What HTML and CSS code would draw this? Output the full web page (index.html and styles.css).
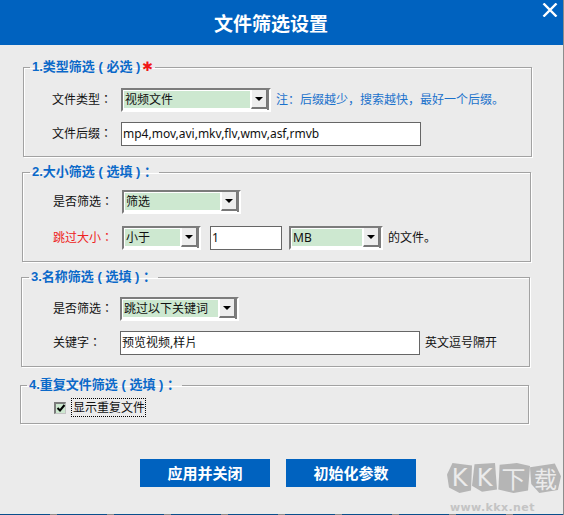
FILE: index.html
```html
<!DOCTYPE html>
<html lang="zh-CN">
<head>
<meta charset="utf-8">
<title>文件筛选设置</title>
<link rel="stylesheet" href="styles.css">
</head>
<body>
<div class="window">
  <header class="titlebar">
    <h1 class="title">文件筛选设置</h1>
    <svg class="close" width="16" height="14" viewBox="0 0 16 14"><path d="M1.5 0.5 L14.5 13.5 M14.5 0.5 L1.5 13.5" stroke="#fff" stroke-width="2.4" fill="none"/></svg>
  </header>
  <main class="content">
    <fieldset class="group g1">
      <legend class="legend">1.类型筛选 ( 必选 )<span class="star">✱</span></legend>
      <div class="row">
        <span class="label">文件类型：</span>
        <div class="combo w150"><span class="value">视频文件</span><span class="drop"><i class="arrow"></i></span></div>
        <span class="note">注：后缀越少，搜索越快，最好一个后缀。</span>
      </div>
      <div class="row">
        <span class="label">文件后缀：</span>
        <div class="field w300">mp4,mov,avi,mkv,flv,wmv,asf,rmvb</div>
      </div>
    </fieldset>
    <fieldset class="group g2">
      <legend class="legend">2.大小筛选 ( 选填 ) ：</legend>
      <div class="row">
        <span class="label">是否筛选：</span>
        <div class="combo w119"><span class="value">筛选</span><span class="drop"><i class="arrow"></i></span></div>
      </div>
      <div class="row">
        <span class="label warn">跳过大小：</span>
        <div class="combo w79"><span class="value">小于</span><span class="drop"><i class="arrow"></i></span></div>
        <div class="field w72 gap9">1</div>
        <div class="combo w94 gap7"><span class="value">MB</span><span class="drop"><i class="arrow"></i></span></div>
        <span class="suffix">的文件。</span>
      </div>
    </fieldset>
    <fieldset class="group g3">
      <legend class="legend">3.名称筛选 ( 选填 ) ：</legend>
      <div class="row">
        <span class="label">是否筛选：</span>
        <div class="combo w119"><span class="value">跳过以下关键词</span><span class="drop"><i class="arrow"></i></span></div>
      </div>
      <div class="row">
        <span class="label">关键字：</span>
        <div class="field w300">预览视频,样片</div>
        <span class="suffix">英文逗号隔开</span>
      </div>
    </fieldset>
    <fieldset class="group g4">
      <legend class="legend">4.重复文件筛选 ( 选填 ) ：</legend>
      <label class="check">
        <span class="box"><svg width="10" height="10" viewBox="0 0 10 10"><path d="M1.5 5 L4 7.5 L8.5 2" stroke="#000" stroke-width="2" fill="none"/></svg></span>
        <span class="check-text">显示重复文件</span>
      </label>
    </fieldset>
    <div class="actions">
      <button class="btn" type="button">应用并关闭</button>
      <button class="btn" type="button">初始化参数</button>
    </div>
  </main>
  <div class="watermark">
    <div class="stones">
      <span class="stone s1">K</span>
      <span class="stone s2">K</span>
      <span class="stone s3">下</span>
      <span class="stone s4">载</span>
    </div>
    <div class="site">www.kkx.net</div>
  </div>
</div>
<div class="edge"></div>
</body>
</html>
```
FILE: styles.css
```css
* { box-sizing: border-box; }
html, body { margin: 0; padding: 0; }
body {
  width: 564px;
  height: 515px;
  overflow: hidden;
  background: #8d8d8d;
  font: 12px/16px "Noto Sans", "Noto Sans CJK TC", sans-serif;
  font-feature-settings: "locl" 0;
  color: #111;
}
.window {
  position: relative;
  width: 563px;
  height: 514px;
  background: #ebebeb;
}
.titlebar {
  position: relative;
  height: 45px;
  background: #0062bf;
  display: flex;
  align-items: center;
  justify-content: center;
  padding-right: 21px;
}
.title {
  margin: 0;
  color: #fff;
  font: bold 19px/24px "Noto Sans CJK SC", sans-serif;
}
.close { position: absolute; top: 3px; right: 5px; }
.content { display: flex; flex-direction: column; padding-top: 15px; }

.group {
  margin: 0;
  padding: 0;
  min-width: 0;
  border: 1px solid #a2a2a2;
  box-shadow: 1px 1px 0 #fff, inset 1px 1px 0 #fff;
  display: block;
}
.legend {
  padding: 0 2px;
  color: #0b69c9;
  font: bold 13px/14px "Liberation Sans", "Noto Sans CJK TC", sans-serif;
  white-space: pre;
}
.star { color: #f01818; font: bold 13px/14px "DejaVu Sans", sans-serif; margin-left: 2px; }

.g1 { margin-left: 23px; width: 509px; height: 97px; padding: 14px 0 0 28px; }
.g1 .legend { margin-left: -22px; }
.g2 { margin-left: 22px; width: 509px; height: 97px; margin-top: 8px; padding: 11px 0 0 30px; }
.g2 .legend { margin-left: -23px; }
.g3 { margin-left: 21px; width: 509px; height: 97px; margin-top: 8px; padding: 13px 0 0 31px; }
.g3 .legend { margin-left: -24px; }
.g4 { margin-left: 20px; width: 509px; height: 46px; margin-top: 11px; }
.g4 .legend { margin-left: 6px; }

.row { display: flex; align-items: center; height: 24px; }
.row + .row { margin-top: 10px; }
.g2 .row + .row { margin-top: 12px; }
.label { width: 69px; flex: none; }
.g3 .label { width: 67px; }
.warn { color: #ee2222; }

.combo {
  display: flex;
  height: 24px;
  flex: none;
  padding: 1px 1px 2px 1px;
  border-top: 2px solid #7c7c7c;
  border-left: 2px solid #7c7c7c;
  border-right: 2px solid #fff;
  border-bottom: 2px solid #fff;
  background: #fff;
  box-shadow: inset -2px 0 0 #7c7c7c;
}
.value {
  flex: 1;
  min-width: 0;
  background: #cde8d0;
  padding-left: 1px;
  line-height: 17px;
  white-space: nowrap;
  overflow: hidden;
}
.drop {
  width: 16px;
  flex: none;
  margin: -1px 1px -1px 1px;
  background: #ededed;
  border-right: 1px solid #777;
  border-bottom: 2px solid #777;
  border-left: 1px solid #fff;
  display: flex;
  align-items: center;
  justify-content: center;
}
.arrow {
  width: 0;
  height: 0;
  border-left: 4px solid transparent;
  border-right: 4px solid transparent;
  border-top: 4px solid #000;
}
.field {
  height: 24px;
  flex: none;
  background: #fff;
  border: 1px solid #666;
  padding-left: 1px;
  line-height: 22px;
  white-space: nowrap;
}
.w150 { width: 150px; }
.w119 { width: 119px; }
.w79 { width: 79px; }
.w94 { width: 94px; }
.w72 { width: 72px; }
.w300 { width: 300px; }
.gap9 { margin-left: 9px; }
.gap7 { margin-left: 7px; }
.note { margin-left: 5px; color: #1b72cc; white-space: nowrap; font-feature-settings: normal; }
.suffix { margin-left: 5px; white-space: nowrap; font-feature-settings: normal; }

.check { display: flex; align-items: center; margin: 6px 0 0 33px; }
.box {
  width: 12px;
  height: 12px;
  background: #cde8d0;
  border-top: 2px solid #7c7c7c;
  border-left: 2px solid #7c7c7c;
  border-right: 1px solid #c4c4c4;
  border-bottom: 1px solid #c4c4c4;
  display: flex;
  align-items: center;
  justify-content: center;
}
.box svg { flex: none; }
.check-text { margin-left: 5px; padding: 1px 0 0 1px; border: 1px dotted #000; line-height: 16px; }

.actions { display: flex; gap: 16px; margin: 35px 0 0 140px; }
.btn {
  width: 130px;
  height: 28px;
  padding: 0;
  border: 0;
  background: #0062bf;
  color: #fff;
  font: bold 15px/20px "Noto Sans CJK SC", sans-serif;
}

.watermark { position: absolute; left: 447px; top: 463px; width: 114px; }
.stones { display: flex; }
.stone {
  height: 30px;
  background: #b5b5b5;
  color: #ebebeb;
  display: flex;
  align-items: center;
  justify-content: center;
}
.s1 { width: 25px; font: 24px/30px "DejaVu Sans", sans-serif; clip-path: polygon(22% 0, 100% 8%, 96% 92%, 50% 100%, 8% 82%, 0 38%); }
.s2 { width: 25px; font: 24px/30px "DejaVu Sans", sans-serif; clip-path: polygon(10% 4%, 92% 0, 100% 88%, 40% 96%, 0 76%); }
.s3 { width: 33px; font: 24px/30px "Noto Sans CJK SC", sans-serif; clip-path: polygon(8% 6%, 60% 0, 100% 10%, 94% 92%, 50% 100%, 4% 88%); }
.s4 { width: 31px; font: 23px/30px "Noto Sans CJK SC", sans-serif; clip-path: polygon(0 14%, 80% 2%, 100% 44%, 90% 90%, 30% 100%, 4% 70%); }
.site {
  margin-top: 9px;
  padding-left: 3px;
  color: #c4c4c4;
  font: bold 11px/12px "DejaVu Sans", sans-serif;
  letter-spacing: 0.4px;
  white-space: nowrap;
}
.edge {
  height: 1px;
  background: repeating-linear-gradient(90deg, #0a4f8c 0 50px, #8d8d8d 50px 57px);
}
```
